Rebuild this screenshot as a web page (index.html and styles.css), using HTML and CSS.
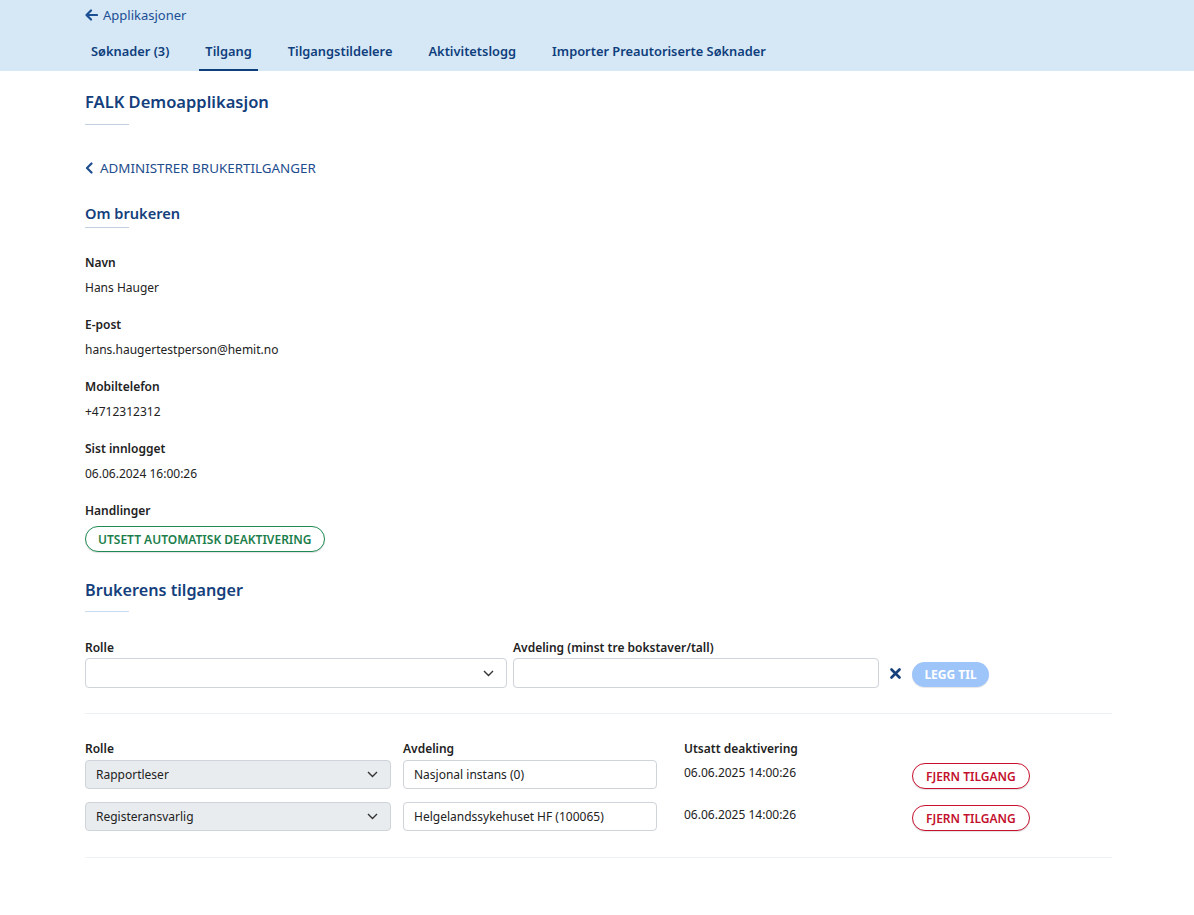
FILE: index.html
```html
<!DOCTYPE html>
<html lang="no">
<head>
<meta charset="utf-8">
<title>FALK Demoapplikasjon</title>
<link rel="stylesheet" href="styles.css">
</head>
<body>
<header class="topbar">
  <div class="topbar-inner">
    <a class="back-link" href="#">
      <svg class="back-arrow" width="13" height="12" viewBox="0 0 13 12"><path d="M6 1.5 1.5 6 6 10.5M1.8 6H12" fill="none" stroke="currentColor" stroke-width="2.2" stroke-linecap="round" stroke-linejoin="round"/></svg>
      <span>Applikasjoner</span>
    </a>
    <nav class="tabs">
      <a class="tab" href="#">Søknader (3)</a>
      <a class="tab active" href="#">Tilgang</a>
      <a class="tab" href="#">Tilgangstildelere</a>
      <a class="tab" href="#">Aktivitetslogg</a>
      <a class="tab" href="#">Importer Preautoriserte Søknader</a>
    </nav>
  </div>
</header>

<main class="page">
  <h1 class="app-title">FALK Demoapplikasjon</h1>
  <div class="rule"></div>

  <a class="crumb" href="#">
    <svg width="9" height="12" viewBox="0 0 9 12"><path d="M6.5 1.5 2 6l4.5 4.5" fill="none" stroke="currentColor" stroke-width="2.2" stroke-linecap="round" stroke-linejoin="round"/></svg>
    <span>ADMINISTRER BRUKERTILGANGER</span>
  </a>

  <h2 class="section-title">Om brukeren</h2>
  <div class="rule rule-small"></div>

  <dl class="info">
    <div class="info-item"><dt>Navn</dt><dd>Hans Hauger</dd></div>
    <div class="info-item"><dt>E-post</dt><dd>hans.haugertestperson@hemit.no</dd></div>
    <div class="info-item"><dt>Mobiltelefon</dt><dd>+4712312312</dd></div>
    <div class="info-item"><dt>Sist innlogget</dt><dd>06.06.2024 16:00:26</dd></div>
    <div class="info-item"><dt>Handlinger</dt><dd><button class="btn-outline green">UTSETT AUTOMATISK DEAKTIVERING</button></dd></div>
  </dl>

  <h2 class="section-title big">Brukerens tilganger</h2>
  <div class="rule rule-blue"></div>

  <div class="add-row">
    <div class="field field-role">
      <label>Rolle</label>
      <div class="select">
        <span></span>
        <svg class="chev" width="11" height="7" viewBox="0 0 11 7"><path d="M1 1l4.5 4.5L10 1" fill="none" stroke="#333" stroke-width="1.4"/></svg>
      </div>
    </div>
    <div class="field field-dept">
      <label>Avdeling (minst tre bokstaver/tall)</label>
      <div class="input"></div>
    </div>
    <svg class="clear-x" width="11" height="11" viewBox="0 0 11 11"><path d="M1.5 1.5l8 8M9.5 1.5l-8 8" stroke="#173f7a" stroke-width="2.6" stroke-linecap="round"/></svg>
    <button class="btn-add">LEGG TIL</button>
  </div>

  <div class="divider"></div>

  <div class="access-table">
    <div class="th">Rolle</div>
    <div class="th">Avdeling</div>
    <div class="th">Utsatt deaktivering</div>
    <div class="th"></div>

    <div class="select gray"><span>Rapportleser</span><svg class="chev" width="11" height="7" viewBox="0 0 11 7"><path d="M1 1l4.5 4.5L10 1" fill="none" stroke="#333" stroke-width="1.4"/></svg></div>
    <div class="input short">Nasjonal instans (0)</div>
    <div class="date">06.06.2025 14:00:26</div>
    <div class="cell-btn"><button class="btn-outline red">FJERN TILGANG</button></div>

    <div class="select gray"><span>Registeransvarlig</span><svg class="chev" width="11" height="7" viewBox="0 0 11 7"><path d="M1 1l4.5 4.5L10 1" fill="none" stroke="#333" stroke-width="1.4"/></svg></div>
    <div class="input short">Helgelandssykehuset HF (100065)</div>
    <div class="date">06.06.2025 14:00:26</div>
    <div class="cell-btn"><button class="btn-outline red">FJERN TILGANG</button></div>
  </div>

  <div class="divider bottom"></div>
</main>
</body>
</html>
```

FILE: styles.css
```css
* { box-sizing: border-box; }
html, body { margin: 0; padding: 0; background: #fff; }
body {
  font-family: "Noto Sans", "Open Sans", "Liberation Sans", sans-serif;
  font-size: 12px;
  color: #222;
}
a { text-decoration: none; }

.topbar {
  background: #d6e8f5;
  height: 71px;
}
.topbar-inner {
  padding: 4px 0 0 85px;
}
.back-link {
  display: inline-flex;
  align-items: center;
  gap: 5px;
  color: #1c4f94;
  font-size: 13px;
  height: 22px;
}
.back-arrow { color: #1c4f94; }
.tabs {
  display: flex;
  gap: 24px;
  margin-top: 11px;
}
.tab {
  display: block;
  padding: 4px 6px 8px;
  color: #0f3e7d;
  font-weight: 600;
  font-size: 12.85px;
  line-height: 20px;
  border-bottom: 2px solid transparent;
}
.tab.active { border-bottom-color: #0f3e7d; }

.page {
  padding: 0 82px 60px 85px;
}
.app-title {
  margin: 19px 0 0;
  font-size: 16.5px;
  line-height: 24px;
  font-weight: 600;
  color: #143f7c;
}
.rule {
  width: 44px;
  height: 1px;
  background: #c3cede;
  margin-top: 10px;
}
.crumb {
  display: inline-flex;
  align-items: center;
  gap: 6px;
  margin-top: 33px;
  color: #1d4d8d;
  font-size: 13.4px;
  line-height: 20px;
}
.section-title {
  margin: 24px 0 0;
  font-size: 14.6px;
  line-height: 22px;
  font-weight: 600;
  color: #143f7c;
}
.rule-small { margin-top: 3px; }
.info { margin: 25px 0 0; }
.info-item { margin-bottom: 17px; }
.info dt {
  font-weight: 600;
  line-height: 20px;
  color: #222;
}
.info dd {
  margin: 5px 0 0;
  line-height: 20px;
  color: #222;
}
.info-item:last-child { margin-bottom: 0; }
.info-item:last-child dd { margin-top: 5px; }

.btn-outline {
  font-family: inherit;
  font-size: 12px;
  font-weight: 600;
  background: #fff;
  border-radius: 14px;
  height: 26px;
  padding: 0 12px;
  cursor: pointer;
  box-shadow: 0 1px 1px rgba(0,0,0,0.12);
}
.btn-outline.green { border: 1px solid #1f8a52; color: #1b7e4a; }
.btn-outline.red { border: 1px solid #c8102e; color: #c3102d; padding: 0 13px; }

.section-title.big {
  font-size: 16.2px;
  line-height: 24px;
  margin-top: 26px;
}
.rule-blue { background: #c8dbf0; margin-top: 9px; }

.add-row {
  display: flex;
  align-items: flex-end;
  margin-top: 27px;
}
.field label {
  display: block;
  font-weight: 600;
  line-height: 18px;
  margin-bottom: 1px;
}
.field-role { width: 422px; }
.field-dept { width: 366px; margin-left: 6px; }
.select, .input {
  height: 30px;
  border: 1px solid #ced4da;
  border-radius: 4px;
  background: #fff;
  display: flex;
  align-items: center;
  padding: 0 10px;
  color: #222;
}
.select { justify-content: space-between; padding-right: 12px; }
.clear-x { margin: 0 11px 9px 11px; }
.btn-add {
  font-family: inherit;
  height: 25px;
  width: 77px;
  border: none;
  border-radius: 13px;
  background: #9ec5fa;
  color: #fff;
  font-size: 12px;
  font-weight: 700;
  margin-bottom: 1px;
  box-shadow: 0 1px 1px rgba(0,0,0,0.1);
}

.divider {
  height: 1px;
  background: #eceff3;
  margin-top: 25px;
}
.divider.bottom { margin-top: 26px; background: #eef2f7; }

.access-table {
  display: grid;
  grid-template-columns: 318px 281px 228px auto;
  row-gap: 13px;
  margin-top: 26px;
  align-items: start;
}
.access-table .th {
  font-weight: 600;
  line-height: 18px;
  margin-bottom: -11px;
}
.select.gray {
  width: 306px;
  height: 29px;
  background: #e9ecef;
}
.input.short { width: 254px; height: 29px; }
.date { padding-top: 3px; line-height: 20px; }
.cell-btn { padding-top: 3px; }
```
